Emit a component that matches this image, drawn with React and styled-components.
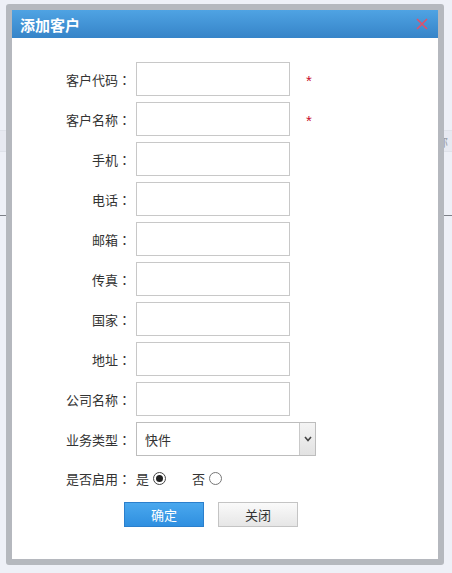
import React, {useState} from 'react';
import styled, {createGlobalStyle} from 'styled-components';

const GlobalStyle = createGlobalStyle`
  html, body {
    margin: 0;
    padding: 0;
    background: #eef0f7;
    font-family: "Noto Sans CJK SC", "Noto Sans", sans-serif;
    font-size: 13px;
    color: #333;
  }
`

const Page = styled.div`
  position: relative;
  width: 452px;
  height: 573px;
  overflow: hidden;
`

const Backdrop = styled.div`
  display: flex;
  flex-direction: column;
  padding-top: 130px;
`

const BackBand = styled.div`
  height: 20px;
  background: #e7e9f1;
  border-top: 1px solid #dfe2ea;
  border-bottom: 1px solid #dfe2ea;
  display: flex;
  justify-content: flex-end;
  align-items: center;
  padding-right: 4px;
  color: #9a9da5;
  font-size: 12px;
`

const BackLine = styled.div`
  margin-top: 63px;
  height: 1px;
  background: #7d8088;
`

const Modal = styled.div`
  position: absolute;
  left: 6px;
  top: 4px;
  width: 426px;
  border: 6px solid #b5b8be;
  border-radius: 3px;
  background: #fff;
`

const TitleBar = styled.div`
  height: 28px;
  background: linear-gradient(#4fa3e3, #3684c8);
  display: flex;
  align-items: center;
  justify-content: space-between;
  padding: 0 10px 0 8px;
  color: #fff;
  font-weight: bold;
  font-size: 15px;
`

const CloseBtn = styled.span`
  display: flex;
  width: 12px;
  height: 12px;
  cursor: pointer;
`

const Body = styled.div`
  padding: 24px 0 32px 0;
  display: flex;
  flex-direction: column;
`

const Row = styled.div`
  display: flex;
  align-items: center;
  height: 34px;
  margin-bottom: 6px;
`

const Label = styled.div`
  width: 119px;
  margin-right: 5px;
  text-align: right;
  white-space: nowrap;
`

const Colon = styled.span`
  font-family: "Noto Sans CJK TC", "Noto Sans CJK SC", sans-serif;
`

const TextInput = styled.input`
  box-sizing: border-box;
  width: 154px;
  height: 34px;
  margin: 0;
  border: 1px solid #c8c8c8;
  padding: 0 6px;
  font-family: inherit;
  font-size: 13px;
  outline: none;
`

const Required = styled.span`
  color: #c8102e;
  margin-left: 16px;
  margin-top: 2px;
  font-family: "Liberation Sans", sans-serif;
  font-size: 15px;
  line-height: 1;
`

const SelectWrap = styled.div`
  position: relative;
  width: 180px;
  height: 34px;
`

const Select = styled.select`
  box-sizing: border-box;
  appearance: none;
  width: 100%;
  height: 100%;
  margin: 0;
  border: 1px solid #bdbdbd;
  background: #fff;
  padding: 0 8px;
  font-family: inherit;
  font-size: 13px;
  color: #333;
  outline: none;
`

const SelectArrow = styled.span`
  position: absolute;
  right: 1px;
  top: 1px;
  bottom: 1px;
  width: 15px;
  background: linear-gradient(#f4f4f4, #e2e2e2);
  border-left: 1px solid #c9c9c9;
  display: flex;
  align-items: center;
  justify-content: center;
  pointer-events: none;
`

const RadioRow = styled.div`
  display: flex;
  align-items: center;
  height: 20px;
  margin-top: 6px;
  padding-left: 54px;
`

const RadioLabel = styled.span`
  margin-right: 5px;
`

const RadioOption = styled.label`
  display: flex;
  align-items: center;
  gap: 4px;
  margin-right: ${p => p.$gap || 0}px;
  cursor: pointer;
`

const RadioDot = styled.span`
  box-sizing: border-box;
  width: 13px;
  height: 13px;
  border-radius: 50%;
  border: 1px solid ${p => p.$checked ? '#444' : '#777'};
  background: #fff;
  display: flex;
  align-items: center;
  justify-content: center;

  &::after {
    content: "";
    width: 7px;
    height: 7px;
    border-radius: 50%;
    background: #222;
    display: ${p => p.$checked ? 'block' : 'none'};
  }
`

const Buttons = styled.div`
  display: flex;
  gap: 14px;
  padding-left: 112px;
  margin-top: 14px;
`

const Button = styled.button`
  box-sizing: border-box;
  width: 80px;
  height: 25px;
  margin: 0;
  font-family: inherit;
  font-size: 13px;
  cursor: pointer;
  border: 1px solid ${p => p.$primary ? '#2b7fcc' : '#c4c4c4'};
  color: ${p => p.$primary ? '#fff' : '#333'};
  background: ${p => p.$primary
    ? 'linear-gradient(#4aa8ee, #2f8fe0)'
    : 'linear-gradient(#fafafa, #e6e6e6)'};
`

const fields = [
    {label: '客户代码', required: true},
    {label: '客户名称', required: true},
    {label: '手机'},
    {label: '电话'},
    {label: '邮箱'},
    {label: '传真'},
    {label: '国家'},
    {label: '地址'},
    {label: '公司名称'},
];

function App() {
    const [enabled, setEnabled] = useState(true);

    return (
        <Page>
            <GlobalStyle/>
            <Backdrop>
                <BackBand>称</BackBand>
                <BackLine/>
            </Backdrop>

            <Modal>
                <TitleBar>
                    添加客户
                    <CloseBtn>
                        <svg width="12" height="12" viewBox="0 0 12 12">
                            <path d="M1 1 L11 11 M11 1 L1 11" stroke="#e0506a" strokeWidth="1.6"/>
                        </svg>
                    </CloseBtn>
                </TitleBar>
                <Body>
                    {fields.map(f => (
                        <Row key={f.label}>
                            <Label>{f.label}<Colon>：</Colon></Label>
                            <TextInput/>
                            {f.required ? <Required>*</Required> : null}
                        </Row>
                    ))}
                    <Row>
                        <Label>业务类型<Colon>：</Colon></Label>
                        <SelectWrap>
                            <Select defaultValue="kj">
                                <option value="kj">快件</option>
                            </Select>
                            <SelectArrow>
                                <svg width="8" height="6" viewBox="0 0 8 6">
                                    <path d="M1 1 L4 4.5 L7 1" stroke="#444" strokeWidth="1.6" fill="none"/>
                                </svg>
                            </SelectArrow>
                        </SelectWrap>
                    </Row>
                    <RadioRow>
                        <RadioLabel>是否启用<Colon>：</Colon></RadioLabel>
                        <RadioOption $gap={26} onClick={() => setEnabled(true)}>
                            是<RadioDot $checked={enabled}/>
                        </RadioOption>
                        <RadioOption onClick={() => setEnabled(false)}>
                            否<RadioDot $checked={!enabled}/>
                        </RadioOption>
                    </RadioRow>
                    <Buttons>
                        <Button $primary>确定</Button>
                        <Button>关闭</Button>
                    </Buttons>
                </Body>
            </Modal>
        </Page>
    );
}

export default App;
